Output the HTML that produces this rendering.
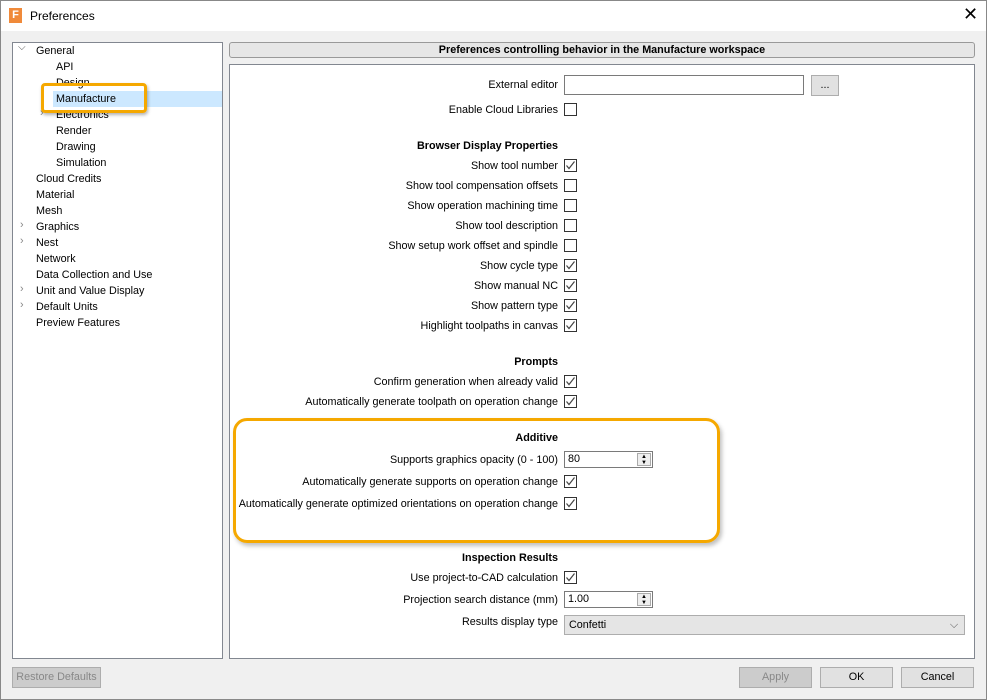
<!DOCTYPE html><html><head><style>
*{box-sizing:border-box;margin:0;padding:0}
body{width:987px;height:700px;background:#f0f0f0;font-family:"Liberation Sans",sans-serif;font-size:10.8px;color:#000;position:relative;overflow:hidden}
.a{position:absolute;white-space:nowrap}
.lb{position:absolute;right:429px;white-space:nowrap;line-height:14px}
.cb{position:absolute;left:564px;width:13px;height:13px;border:1px solid #333;background:#fff}
.cb svg{position:absolute;left:0px;top:0px}
.t{position:absolute;left:36px;line-height:16px}
.t2{left:56px}
.btn{position:absolute;top:667px;height:21px;border:1px solid #adadad;background:#e1e1e1;text-align:center;line-height:19px}
.spin{position:absolute;left:564px;width:89px;height:17px;border:1px solid #7a7a7a;background:#fff;padding-left:3px;line-height:15px}
.spin .s{position:absolute;right:1px;top:1px;width:14px;height:13px;border:1px solid #aaa;background:#eee;font-size:6px;line-height:6px;text-align:center}
</style></head><body>
<div class="a" style="left:0;top:0;width:987px;height:700px;border:1px solid #888"></div>
<div class="a" style="left:1px;top:1px;width:985px;height:30px;background:#fff"></div>
<div class="a" style="left:9px;top:8px;width:13px;height:15px;background:#f08a3a;color:#fff;font-weight:bold;font-size:11px;line-height:15px;text-align:center">F</div>
<div class="a" style="left:30px;top:9px;font-size:12px">Preferences</div>
<div class="a" style="left:963px;top:4px;font-size:18px">✕</div>

<div class="a" style="left:12px;top:42px;width:211px;height:617px;background:#fff;border:1px solid #828790"></div>
<div class="a" style="left:53px;top:91px;width:169px;height:16px;background:#cce8ff"></div>
<div class="a" style="left:18px;top:42px;font-size:10px;color:#555">⌵</div>
<div class="t" style="top:43px">General</div>
<div class="t t2" style="top:59px">API</div>
<div class="t t2" style="top:75px">Design</div>
<div class="t t2" style="top:91px">Manufacture</div>
<div class="a" style="left:40px;top:107px;color:#888">›</div>
<div class="t t2" style="top:107px">Electronics</div>
<div class="t t2" style="top:123px">Render</div>
<div class="t t2" style="top:139px">Drawing</div>
<div class="t t2" style="top:155px">Simulation</div>
<div class="t" style="top:171px">Cloud Credits</div>
<div class="t" style="top:187px">Material</div>
<div class="t" style="top:203px">Mesh</div>
<div class="a" style="left:20px;top:219px;color:#888">›</div><div class="t" style="top:219px">Graphics</div>
<div class="a" style="left:20px;top:235px;color:#888">›</div><div class="t" style="top:235px">Nest</div>
<div class="t" style="top:251px">Network</div>
<div class="t" style="top:267px">Data Collection and Use</div>
<div class="a" style="left:20px;top:283px;color:#888">›</div><div class="t" style="top:283px">Unit and Value Display</div>
<div class="a" style="left:20px;top:299px;color:#888">›</div><div class="t" style="top:299px">Default Units</div>
<div class="t" style="top:315px">Preview Features</div>
<div class="a" style="left:41px;top:83px;width:106px;height:30px;border:3px solid #f5a800;border-radius:4px;box-shadow:1px 2px 3px rgba(0,0,0,.3)"></div>

<div class="a" style="left:229px;top:42px;width:746px;height:16px;background:#e6e6e6;border:1px solid #999;border-radius:3px;text-align:center;font-weight:bold;line-height:14px">Preferences controlling behavior in the Manufacture workspace</div>
<div class="a" style="left:229px;top:64px;width:746px;height:595px;background:#fff;border:1px solid #828790"></div>

<div class="lb" style="top:78px">External editor</div>
<div class="a" style="left:564px;top:75px;width:240px;height:20px;border:1px solid #7a7a7a;background:#fff"></div>
<div class="a" style="left:811px;top:75px;width:28px;height:21px;border:1px solid #adadad;background:#e1e1e1;text-align:center;line-height:18px">...</div>
<div class="lb" style="top:103px">Enable Cloud Libraries</div><div class="cb" style="top:103px"></div>

<div class="lb" style="top:139px;font-weight:bold">Browser Display Properties</div>
<div class="lb" style="top:159px">Show tool number</div><div class="cb c" style="top:159px"></div>
<div class="lb" style="top:179px">Show tool compensation offsets</div><div class="cb" style="top:179px"></div>
<div class="lb" style="top:199px">Show operation machining time</div><div class="cb" style="top:199px"></div>
<div class="lb" style="top:219px">Show tool description</div><div class="cb" style="top:219px"></div>
<div class="lb" style="top:239px">Show setup work offset and spindle</div><div class="cb" style="top:239px"></div>
<div class="lb" style="top:259px">Show cycle type</div><div class="cb c" style="top:259px"></div>
<div class="lb" style="top:279px">Show manual NC</div><div class="cb c" style="top:279px"></div>
<div class="lb" style="top:299px">Show pattern type</div><div class="cb c" style="top:299px"></div>
<div class="lb" style="top:319px">Highlight toolpaths in canvas</div><div class="cb c" style="top:319px"></div>

<div class="lb" style="top:355px;font-weight:bold">Prompts</div>
<div class="lb" style="top:375px">Confirm generation when already valid</div><div class="cb c" style="top:375px"></div>
<div class="lb" style="top:395px">Automatically generate toolpath on operation change</div><div class="cb c" style="top:395px"></div>

<div class="lb" style="top:431px;font-weight:bold">Additive</div>
<div class="lb" style="top:453px">Supports graphics opacity (0 - 100)</div>
<div class="spin" style="top:451px">80<div class="s">▲<br>▼</div></div>
<div class="lb" style="top:475px">Automatically generate supports on operation change</div><div class="cb c" style="top:475px"></div>
<div class="lb" style="top:497px">Automatically generate optimized orientations on operation change</div><div class="cb c" style="top:497px"></div>
<div class="a" style="left:233px;top:418px;width:487px;height:125px;border:3px solid #f5a800;border-radius:14px;box-shadow:2px 3px 4px rgba(0,0,0,.25)"></div>

<div class="lb" style="top:551px;font-weight:bold">Inspection Results</div>
<div class="lb" style="top:571px">Use project-to-CAD calculation</div><div class="cb c" style="top:571px"></div>
<div class="lb" style="top:593px">Projection search distance (mm)</div>
<div class="spin" style="top:591px">1.00<div class="s">▲<br>▼</div></div>
<div class="lb" style="top:615px">Results display type</div>
<div class="a" style="left:564px;top:615px;width:401px;height:20px;border:1px solid #adadad;background:#e5e5e5;padding-left:4px;line-height:18px">Confetti<span style="position:absolute;right:6px;color:#555">⌵</span></div>

<div class="btn" style="left:12px;width:89px;color:#888;background:#ccc">Restore Defaults</div>
<div class="btn" style="left:739px;width:73px;color:#888;background:#ccc">Apply</div>
<div class="btn" style="left:820px;width:73px">OK</div>
<div class="btn" style="left:901px;width:73px">Cancel</div>
<script>document.querySelectorAll('.c').forEach(e=>e.innerHTML='<svg width="11" height="11"><path d="M1.5 5.5L4 8.5L9.5 1.5" fill="none" stroke="#444" stroke-width="1.2"/></svg>')</script>
</body></html>
